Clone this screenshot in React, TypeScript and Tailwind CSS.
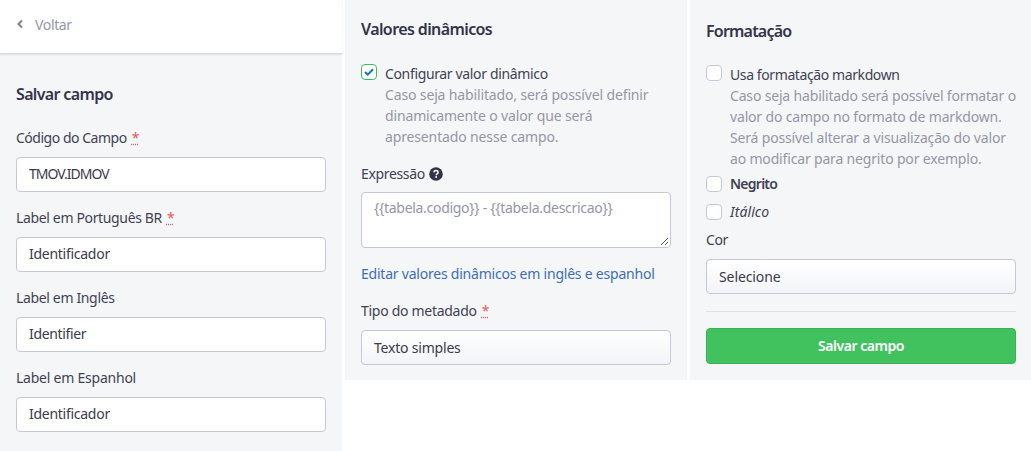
import React from "react";

const font = { fontFamily: '"Noto Sans", sans-serif' };

function Label({ children, req, track = "tracking-[-0.35px]" }: { children: React.ReactNode; req?: boolean; track?: string }) {
  return (
    <div className={`h-[20px] text-[14px] leading-[20px] text-[#3f4254] whitespace-nowrap ${track}`}>
      {children}
      {req && (
        <span className="ml-[5px] text-[#f0555f] underline decoration-dotted decoration-[#f0555f]">*</span>
      )}
    </div>
  );
}

function Input({ value, select, track = "tracking-[-0.35px]" }: { value: string; select?: boolean; track?: string }) {
  return (
    <div
      className={`mt-[9px] h-[35px] w-[310px] rounded-[4px] border border-[#c5c8d8] px-[12px] text-[14px] text-[#3a3b4a] whitespace-nowrap ${track} ${
        select ? "leading-[33px] bg-gradient-to-b from-white to-[#f3f4f8]" : "leading-[32px] bg-white"
      }`}
    >
      {value}
    </div>
  );
}

function Box({ className = "" }: { className?: string }) {
  return <div className={`h-[16px] w-[16px] shrink-0 rounded-[4px] border border-[#c5c8d8] bg-white ${className}`} />;
}

export default function App() {
  return (
    <div className="flex h-[451px] w-[1031px] overflow-hidden bg-white" style={font}>
      <div className="flex w-[342px] shrink-0 flex-col bg-[#f5f6f8]">
        <div className="flex h-[54px] items-center border-b border-[#d8dae2] bg-white pb-[5px] pl-[16px] shadow-[0_1px_2px_rgba(0,0,0,0.08)] text-[14px] text-[#9496a6] tracking-[-0.35px]">
          <svg width="8" height="10" viewBox="0 0 8 10" className="mr-[11px]">
            <path d="M6 1.5 2.5 5 6 8.5" fill="none" stroke="#7f8192" strokeWidth="2" />
          </svg>
          Voltar
        </div>
        <div className="px-[16px] pt-[29px]">
          <div className="text-[16px] font-semibold leading-[22px] tracking-[-0.65px] text-[#33344a]">Salvar campo</div>
          <div className="mt-[23px]">
            <Label req track="tracking-[-0.48px]">Código do Campo</Label>
            <Input value="TMOV.IDMOV" track="tracking-[-1px]" />
          </div>
          <div className="mt-[16px]">
            <Label req>Label em Português BR</Label>
            <Input value="Identificador" track="tracking-[-0.27px]" />
          </div>
          <div className="mt-[16px]">
            <Label>Label em Inglês</Label>
            <Input value="Identifier" />
          </div>
          <div className="mt-[16px]">
            <Label track="tracking-[-0.23px]">Label em Espanhol</Label>
            <Input value="Identificador" track="tracking-[-0.27px]" />
          </div>
        </div>
      </div>

      <div className="ml-[3px] h-[380px] w-[342px] shrink-0 bg-[#f5f6f8] px-[16px] pt-[18px]">
        <div className="text-[16px] font-semibold leading-[22px] tracking-[-0.6px] text-[#33344a]">Valores dinâmicos</div>
        <div className="mt-[23px] flex gap-[8px]">
          <div className="mt-[1px] flex h-[16px] w-[16px] shrink-0 items-center justify-center rounded-[4px] border border-[#3fbf60] bg-white">
            <svg width="10" height="8" viewBox="0 0 10 8">
              <path d="M1 4 3.8 6.6 9 1.2" fill="none" stroke="#1379b5" strokeWidth="2" />
            </svg>
          </div>
          <div className="text-[14px] leading-[21px] tracking-[-0.35px] whitespace-nowrap">
            <div className="text-[#3f4254]">Configurar valor dinâmico</div>
            <div className="text-[#9496a6] tracking-[-0.14px]">
              Caso seja habilitado, será possível definir
              <br />
              dinamicamente o valor que será
              <br />
              apresentado nesse campo.
            </div>
          </div>
        </div>
        <div className="mt-[17px] flex items-center gap-[4px]">
          <Label>Expressão</Label>
          <svg width="14" height="14" viewBox="0 0 14 14">
            <circle cx="7" cy="7" r="6.8" fill="#33344a" />
            <path d="M4.9 5.4C5 4.2 5.9 3.6 7 3.6c1.2 0 2.1.7 2.1 1.8 0 1.5-1.9 1.5-1.9 2.8" fill="none" stroke="#fff" strokeWidth="1.5" />
            <rect x="6.3" y="9.2" width="1.7" height="1.7" fill="#fff" />
          </svg>
        </div>
        <div className="relative mt-[8px] h-[56px] w-[310px] rounded-[4px] border border-[#c5c8d8] bg-white px-[12px] pt-[5px] text-[14px] leading-[20px] tracking-[-0.3px] text-[#9496a6] whitespace-nowrap">
          {"{{tabela.codigo}} - {{tabela.descricao}}"}
          <svg width="9" height="9" viewBox="0 0 9 9" className="absolute bottom-[1px] right-[1px]">
            <path d="M1 8 8 1M5 8 8 5" stroke="#555" strokeWidth="1" />
          </svg>
        </div>
        <div className="mt-[16px] text-[14px] leading-[20px] tracking-[-0.22px] text-[#3d6eb5] whitespace-nowrap">
          Editar valores dinâmicos em inglês e espanhol
        </div>
        <div className="mt-[17px]">
          <Label req track="tracking-[-0.29px]">Tipo do metadado</Label>
          <Input value="Texto simples" select track="tracking-[-0.2px]" />
        </div>
      </div>

      <div className="ml-[3px] h-[380px] w-[341px] shrink-0 bg-[#f5f6f8] px-[16px] pt-[20px]">
        <div className="text-[16px] font-semibold leading-[22px] tracking-[-0.8px] text-[#33344a]">Formatação</div>
        <div className="mt-[22px] flex gap-[8px]">
          <Box className="mt-[1px]" />
          <div className="text-[14px] leading-[21px] tracking-[-0.35px] whitespace-nowrap">
            <div className="text-[#3f4254] tracking-[-0.4px]">Usa formatação markdown</div>
            <div className="text-[#9496a6] tracking-[-0.17px]">
              Caso seja habilitado será possível formatar o
              <br />
              valor do campo no formato de markdown.
              <br />
              Será possível alterar a visualização do valor
              <br />
              ao modificar para negrito por exemplo.
            </div>
          </div>
        </div>
        <div className="mt-[5px] flex items-center gap-[8px] text-[14px] font-semibold leading-[20px] tracking-[-0.75px] text-[#3f4254]">
          <Box />
          Negrito
        </div>
        <div className="mt-[8px] flex items-center gap-[8px] text-[14px] italic leading-[20px] tracking-[0.1px] text-[#3f4254]">
          <Box />
          Itálico
        </div>
        <div className="mt-[8px]">
          <Label>Cor</Label>
          <Input value="Selecione" select track="tracking-[-0.1px]" />
        </div>
        <div className="mt-[17px] h-px w-[310px] bg-[#dfe1e8]" />
        <div className="mt-[16px] h-[36px] w-[310px] rounded-[4px] border border-[#38b158] bg-[#41c25f] text-center text-[14px] font-semibold leading-[34px] tracking-[-0.45px] text-white">
          Salvar campo
        </div>
      </div>
    </div>
  );
}
